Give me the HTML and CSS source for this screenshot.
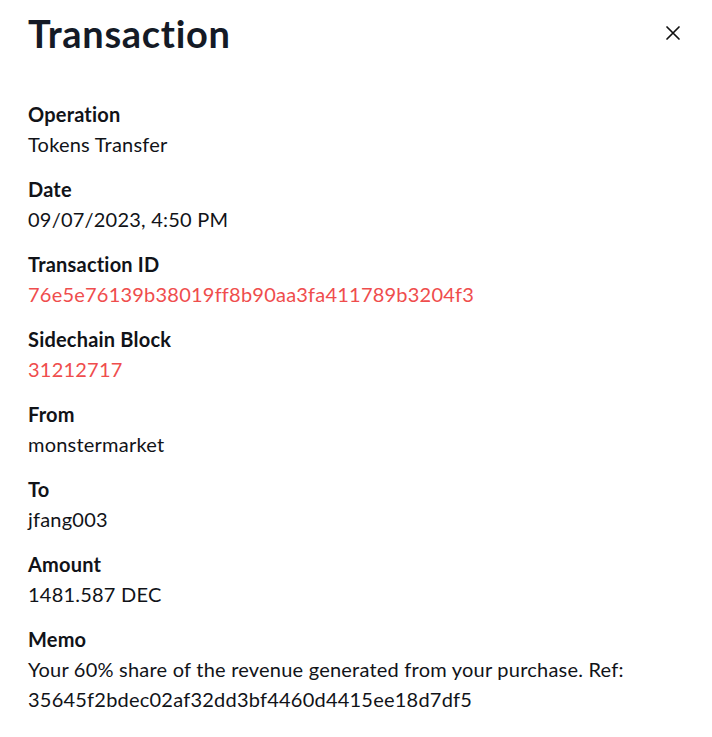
FILE: index.html
```html
<!DOCTYPE html>
<html lang="en">
<head>
<meta charset="utf-8">
<link rel="stylesheet" href="styles.css">
</head>
<body>
<div class="panel">
  <header class="head">
    <h1 class="title">Transaction</h1>
    <button class="close" aria-label="Close">
      <svg width="16" height="16" viewBox="0 0 16 16"><path d="M2 2L14 14M14 2L2 14" stroke="#111" stroke-width="1.7" stroke-linecap="round" fill="none"/></svg>
    </button>
  </header>
  <dl class="fields">
    <div class="field"><dt>Operation</dt><dd>Tokens Transfer</dd></div>
    <div class="field"><dt>Date</dt><dd>09/07/2023, 4:50 PM</dd></div>
    <div class="field"><dt>Transaction ID</dt><dd class="link">76e5e76139b38019ff8b90aa3fa411789b3204f3</dd></div>
    <div class="field"><dt>Sidechain Block</dt><dd class="link">31212717</dd></div>
    <div class="field"><dt>From</dt><dd>monstermarket</dd></div>
    <div class="field"><dt>To</dt><dd>jfang003</dd></div>
    <div class="field"><dt>Amount</dt><dd>1481.587 DEC</dd></div>
    <div class="field"><dt>Memo</dt><dd>Your 60% share of the revenue generated from your purchase. Ref: 35645f2bdec02af32dd3bf4460d4415ee18d7df5</dd></div>
  </dl>
</div>
</body>
</html>
```
FILE: styles.css
```css
* { box-sizing: border-box; }
html, body { margin: 0; background: #fff; }
body {
  font-family: "Lato", "Noto Sans", sans-serif;
  color: #111318;
}
.panel {
  padding: 7px 28px 20px 28px;
  width: 712px;
}
.head {
  display: flex;
  justify-content: space-between;
  align-items: center;
  height: 52px;
}
.title {
  margin: 0;
  font-size: 38px;
  font-weight: 700;
  color: #141a26;
  letter-spacing: 0.7px;
}
.close {
  background: none;
  border: 0;
  padding: 0;
  margin-right: 3px;
  width: 16px;
  height: 16px;
  display: flex;
  cursor: pointer;
}
.fields {
  margin: 40px 0 0 0;
  display: flex;
  flex-direction: column;
  gap: 15px;
}
.field dt {
  font-size: 20px;
  font-weight: 700;
  line-height: 30px;
  letter-spacing: 0.2px;
}
.field dd {
  margin: 0;
  font-size: 20px;
  line-height: 30px;
  letter-spacing: 0.22px;
  max-width: 640px;
}
.field dd.link { color: #ef4d4d; }
```
